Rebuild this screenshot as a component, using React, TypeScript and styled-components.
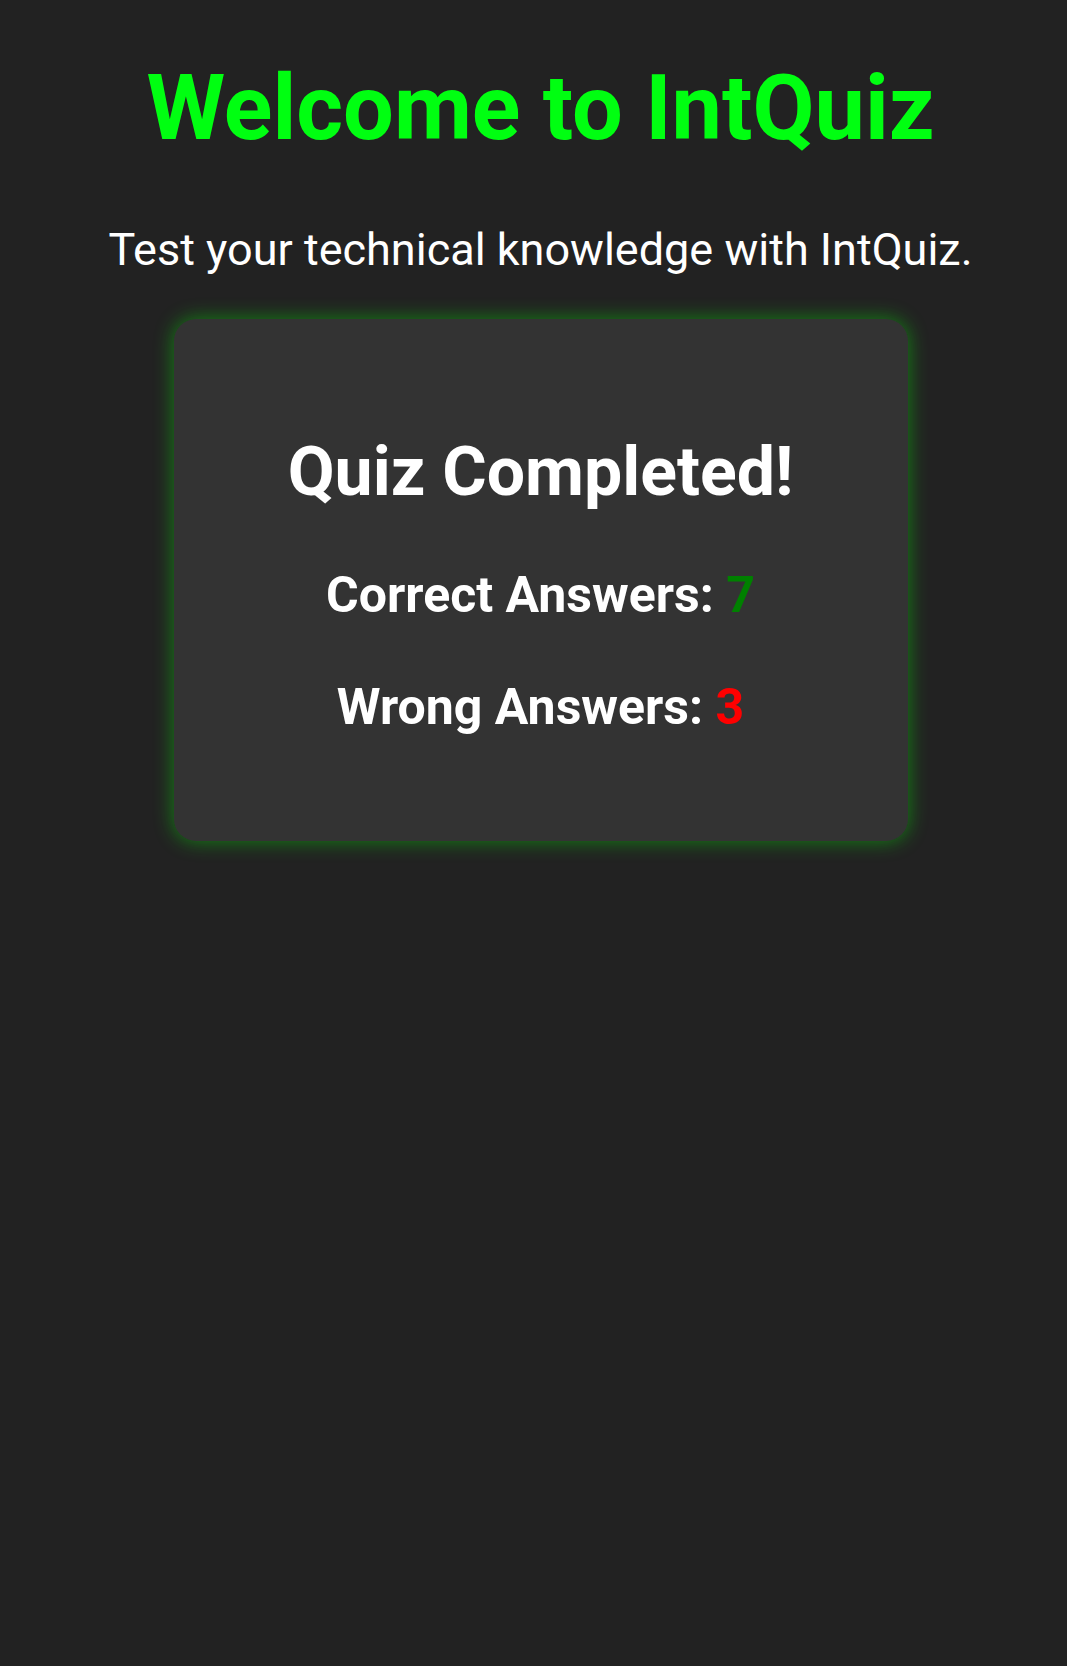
import React from "react";
import styled, { createGlobalStyle } from "styled-components";

const GlobalStyle = createGlobalStyle`
  html, body {
    margin: 0;
    padding: 0;
    background-color: #222222;
  }
  body {
    font-family: Roboto, "Liberation Sans", sans-serif;
    color: #ffffff;
    min-height: 1666px;
  }
`;

const SPage = styled.div`
  display: flex;
  flex-direction: column;
  align-items: center;
  padding: 56px 0 0 14px;
  text-align: center;
`;

const STitle = styled.h1`
  margin: 0;
  font-size: 90px;
  font-weight: 700;
  color: #00ff11;
`;

const SSubtitle = styled.p`
  margin: 62px 0 0 0;
  font-size: 45px;
  font-weight: 400;
`;

const SCard = styled.div`
  width: 734px;
  box-sizing: border-box;
  margin-top: 43px;
  padding: 113px 20px 105px;
  background-color: #333333;
  border-radius: 22px;
  box-shadow: 0 0 20px rgba(0, 255, 0, 0.45);
  display: flex;
  flex-direction: column;
  align-items: center;
`;

const SHeading = styled.h2`
  margin: 0;
  font-size: 68px;
  font-weight: 700;
`;

const SScore = styled.p`
  margin: 54px 0 0 0;
  font-size: 50px;
  font-weight: 700;
`;

const SValue = styled.span<{ $tone: "good" | "bad" }>`
  color: ${(p) => (p.$tone === "good" ? "#008000" : "#ff0000")};
`;

export default function App() {
  return (
    <>
      <GlobalStyle />
      <SPage>
        <STitle>Welcome to IntQuiz</STitle>
        <SSubtitle>Test your technical knowledge with IntQuiz.</SSubtitle>
        <SCard>
          <SHeading>Quiz Completed!</SHeading>
          <SScore>
            Correct Answers: <SValue $tone="good">7</SValue>
          </SScore>
          <SScore>
            Wrong Answers: <SValue $tone="bad">3</SValue>
          </SScore>
        </SCard>
      </SPage>
    </>
  );
}
